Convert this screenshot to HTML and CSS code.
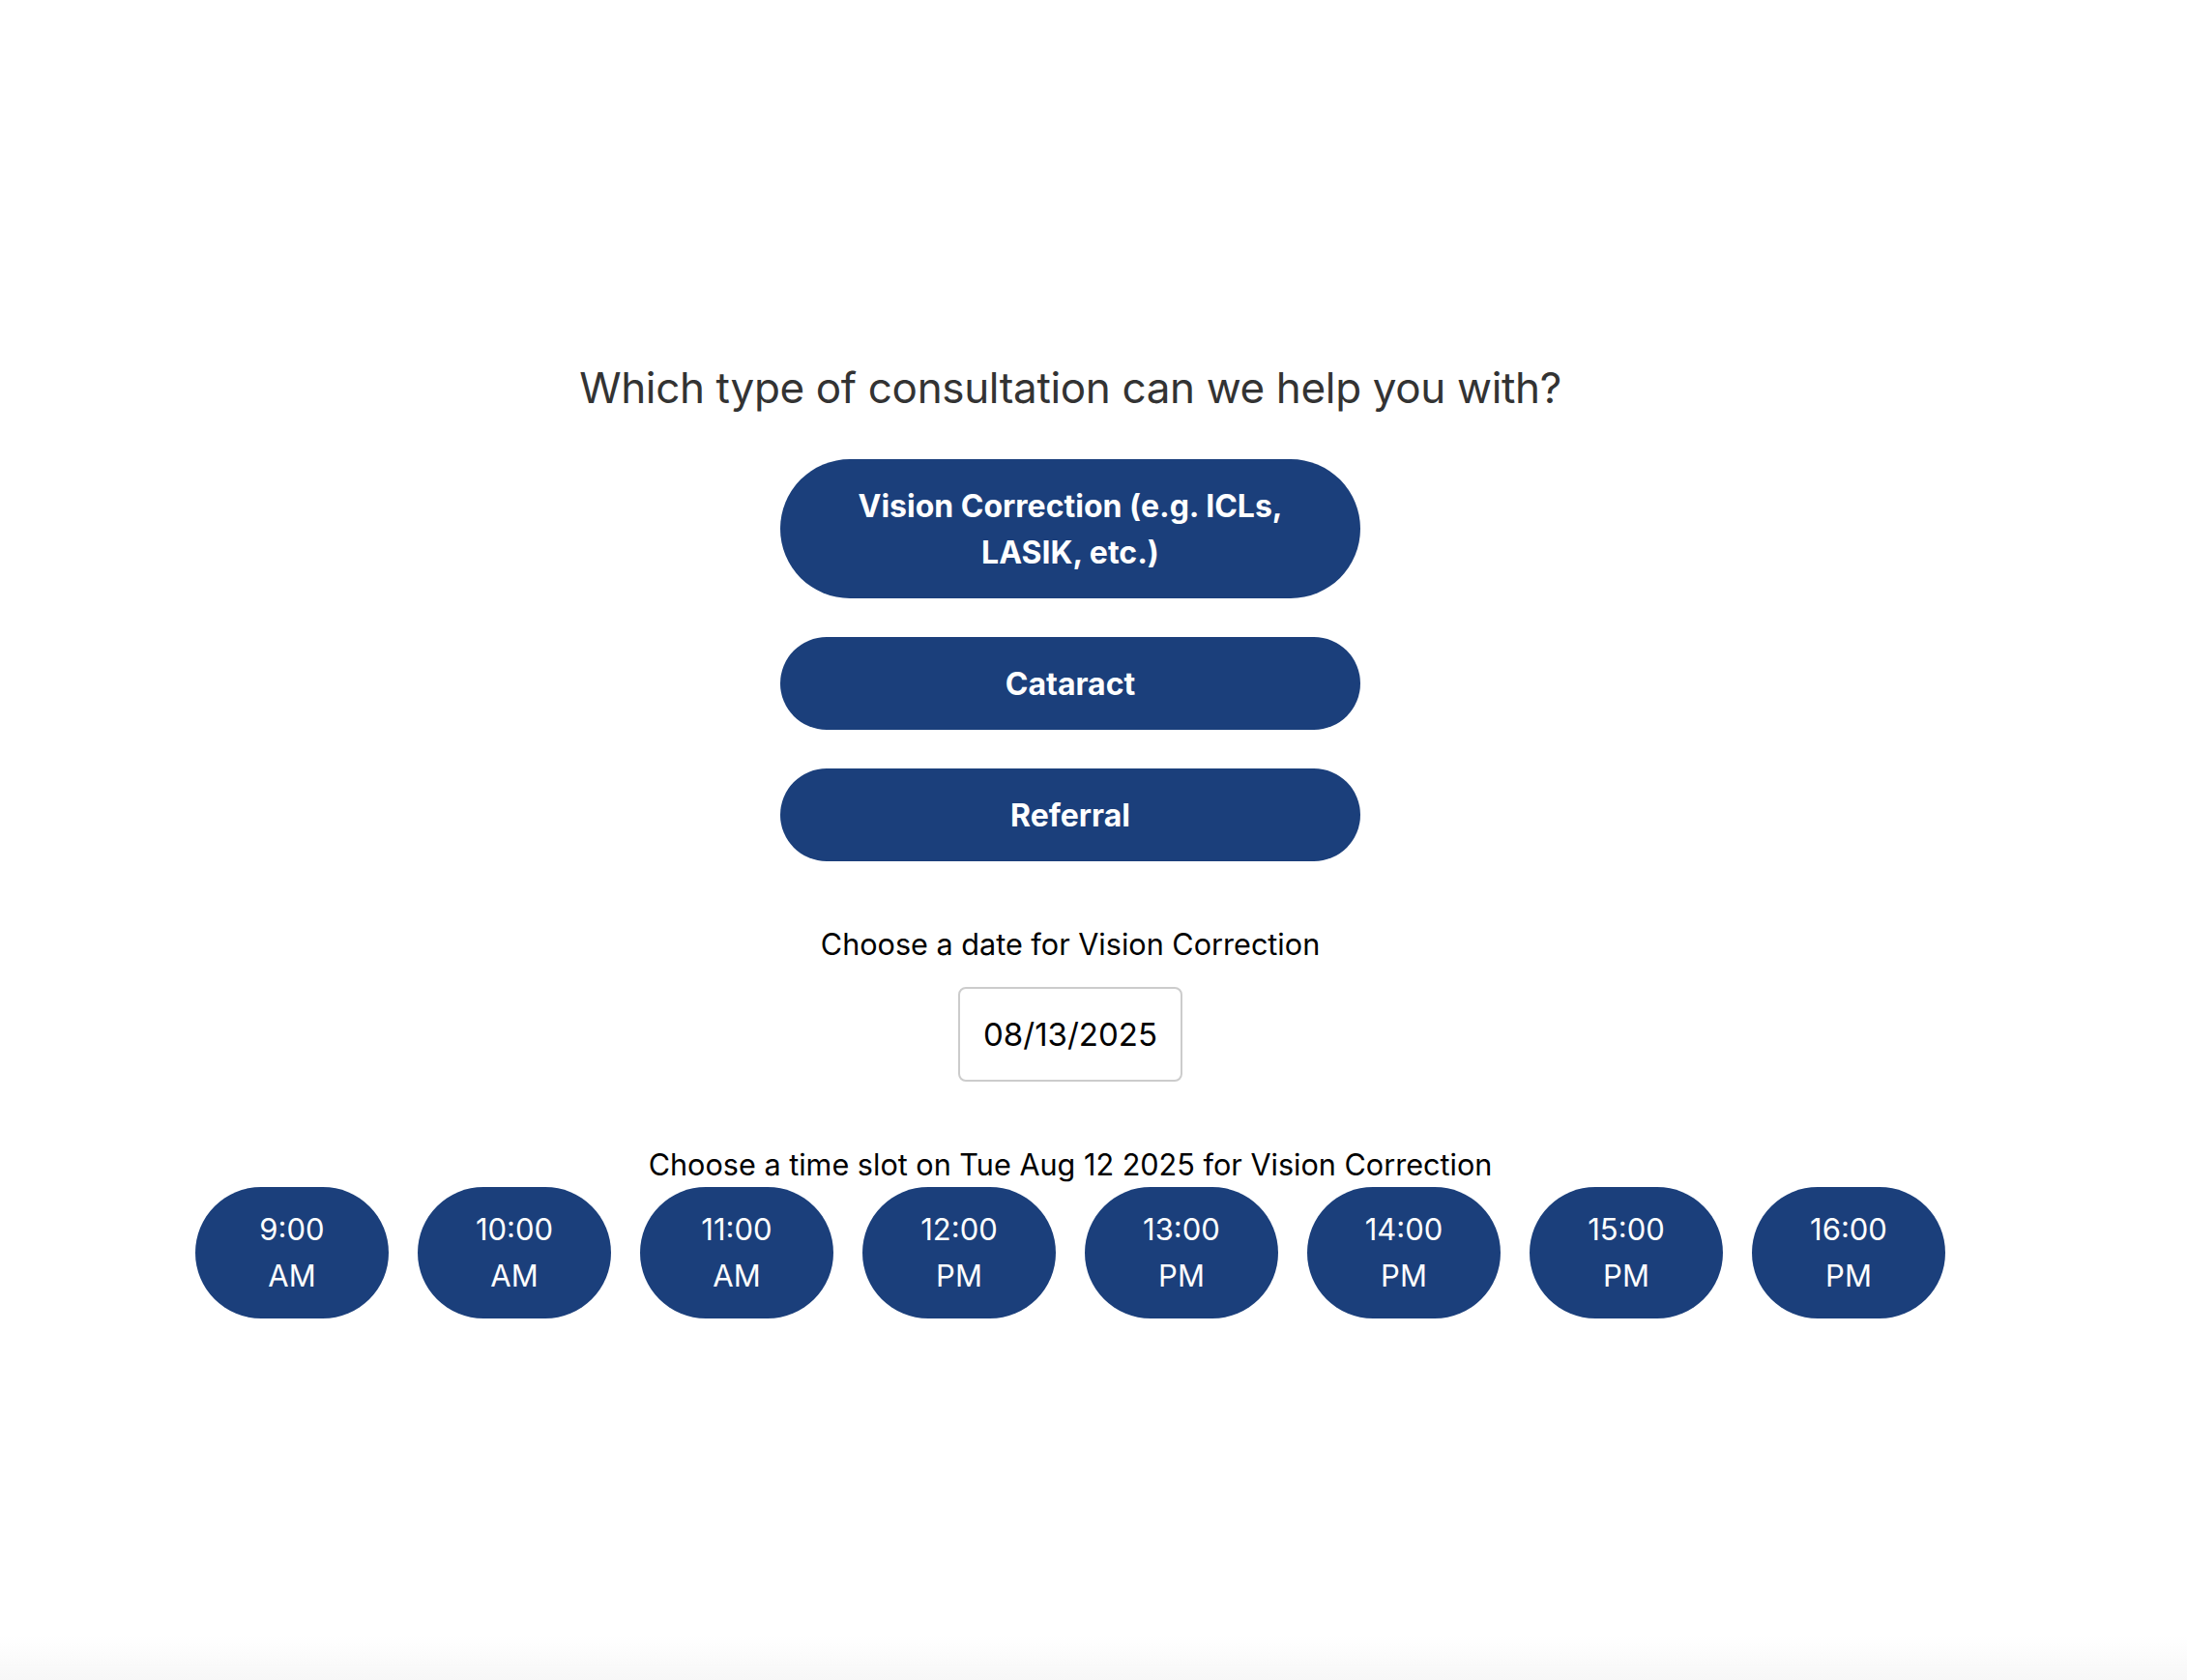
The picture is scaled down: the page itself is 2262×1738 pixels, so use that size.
FILE: index.html
```html
<!DOCTYPE html>
<html lang="en">
<head>
<meta charset="utf-8">
<title>Book a consultation</title>
<link rel="stylesheet" href="styles.css">
</head>
<body>
<main class="page">
  <h1 class="title">Which type of consultation can we help you with?</h1>
  <div class="types">
    <button class="type-btn">Vision Correction (e.g. ICLs, LASIK, etc.)</button>
    <button class="type-btn">Cataract</button>
    <button class="type-btn">Referral</button>
  </div>
  <p class="label date-label">Choose a date for Vision Correction</p>
  <input class="date-input" type="text" value="08/13/2025" readonly>
  <p class="label time-label">Choose a time slot on Tue Aug 12 2025 for Vision Correction</p>
  <div class="slots">
    <button class="slot">9:00 AM</button>
    <button class="slot">10:00 AM</button>
    <button class="slot">11:00 AM</button>
    <button class="slot">12:00 PM</button>
    <button class="slot">13:00 PM</button>
    <button class="slot">14:00 PM</button>
    <button class="slot">15:00 PM</button>
    <button class="slot">16:00 PM</button>
  </div>
</main>
</body>
</html>
```
FILE: styles.css
```css
html, body {
  height: 100%;
}
body {
  margin: 0;
  font-family: Inter, "Noto Sans", "Liberation Sans", sans-serif;
  background: linear-gradient(to bottom, #ffffff calc(100% - 45px), #f7f7f7 100%);
  color: #000;
}
.page {
  display: flex;
  flex-direction: column;
  align-items: center;
  padding: 373px 48px 0 0;
}
.title {
  margin: 0;
  font-size: 44px;
  line-height: 56px;
  font-weight: 400;
  color: #333333;
  letter-spacing: -0.35px;
}
.types {
  display: flex;
  flex-direction: column;
  gap: 40px;
  width: 600px;
  margin-top: 46px;
}
.type-btn {
  border: none;
  border-radius: 999px;
  background: #1b3f7b;
  color: #ffffff;
  font-family: inherit;
  font-size: 32px;
  font-weight: 700;
  line-height: 48px;
  padding: 25px 48px 23px;
  text-align: center;
  cursor: pointer;
}
.label {
  margin: 0;
  font-size: 30.6px;
  line-height: 44px;
  color: #000;
}
.date-label {
  margin-top: 64px;
}
.date-input {
  margin-top: 22px;
  width: 232px;
  height: 98px;
  box-sizing: border-box;
  border: 2px solid #cccccc;
  border-radius: 8px;
  background: #fff;
  font-family: inherit;
  font-size: 33px;
  color: #000;
  text-align: center;
  padding: 0;
  outline: none;
}
.time-label {
  margin-top: 64px;
  margin-bottom: 1px;
}
.slots {
  display: flex;
  gap: 30px;
}
.slot {
  width: 200px;
  height: 136px;
  box-sizing: border-box;
  border: none;
  border-radius: 999px;
  background: #1b3f7b;
  color: #ffffff;
  font-family: inherit;
  font-size: 31px;
  font-weight: 400;
  line-height: 48px;
  padding: 20px 50px;
  text-align: center;
  cursor: pointer;
}
```
